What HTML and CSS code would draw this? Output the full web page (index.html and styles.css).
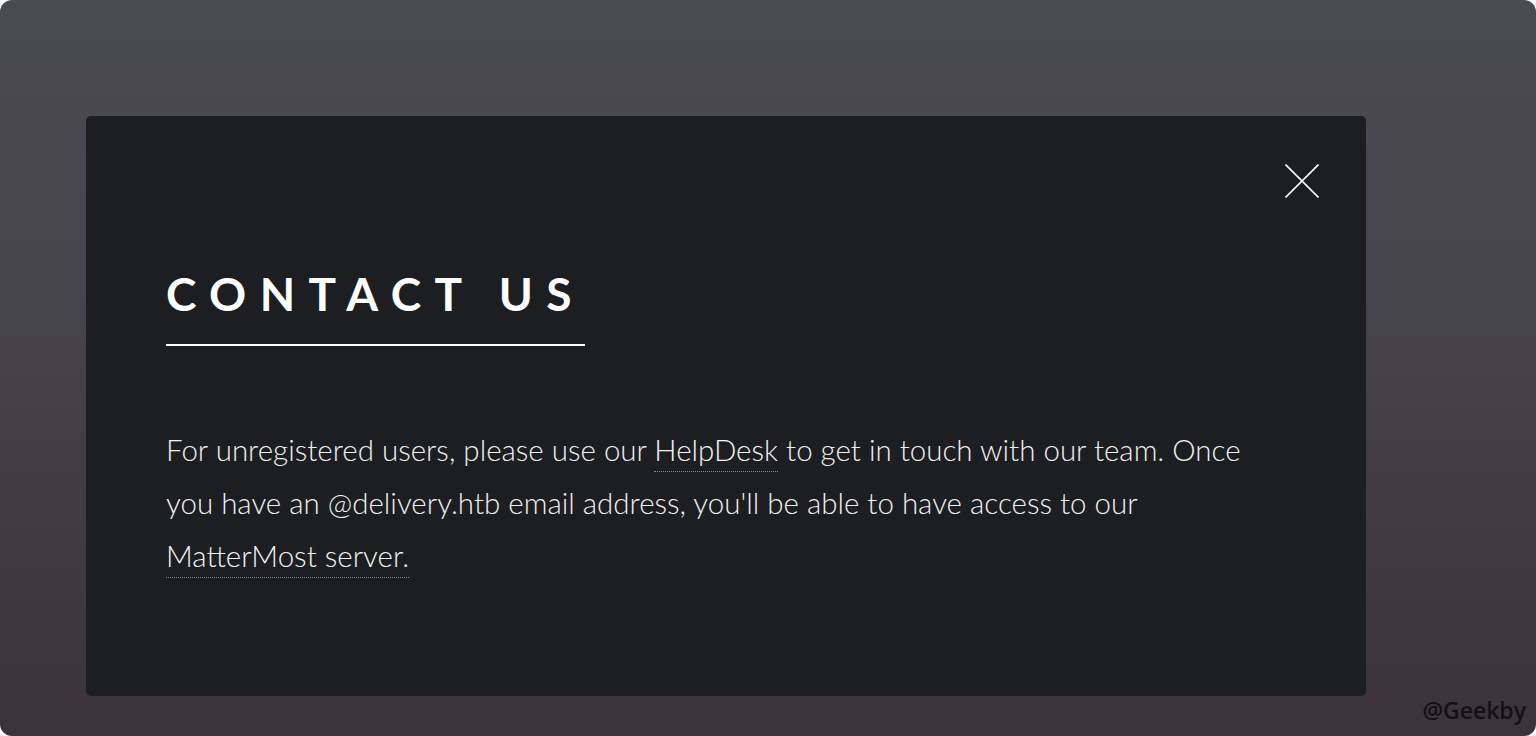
FILE: index.html
```html
<!DOCTYPE html>
<html lang="en">
<head>
    <meta charset="UTF-8">
    <meta name="viewport" content="width=device-width, initial-scale=1.0">
    <title>Contact Us</title>
    <link rel="stylesheet" href="styles.css">
</head>
<body>

    <div class="screen">
        <div class="modal">
            <div class="modalTop">
                <button class="closeBtn" aria-label="Close">
                    <svg width="34" height="34" viewBox="0 0 34 34">
                        <path d="M0.5 0.5 L33.5 33.5 M33.5 0.5 L0.5 33.5" stroke="#ffffff" stroke-width="1.6" fill="none"/>
                    </svg>
                </button>
            </div>
            <h2 class="title">CONTACT US</h2>
            <p class="text">
                For unregistered users, please use our <a href="#">HelpDesk</a> to get in touch with our team. Once
                you have an @delivery.htb email address, you'll be able to have access to our
                <a href="#">MatterMost server.</a>
            </p>
        </div>
        <div class="watermark">@Geekby</div>
    </div>

</body>
</html>
```

FILE: styles.css
```css
body {
    margin: 0;
    padding: 0;
    background-color: #ffffff;
    font-family: "Lato", "Open Sans", sans-serif;
}
.screen {
    position: relative;
    height: 736px;
    border-radius: 12px;
    overflow: hidden;
    background: linear-gradient(180deg, #4b4b53 0%, #46444c 40%, #3b323a 100%);
    padding: 116px 0 0 86px;
    box-sizing: border-box;
}
.modal {
    width: 1280px;
    height: 580px;
    box-sizing: border-box;
    background-color: #1c1e21;
    border-radius: 5px;
    padding: 47px 47px 0 80px;
}
.modalTop {
    display: flex;
    justify-content: flex-end;
}
.closeBtn {
    background: none;
    border: none;
    padding: 0;
    margin-top: 1px;
    width: 34px;
    height: 34px;
    cursor: pointer;
}
.closeBtn svg {
    display: block;
}
.title {
    display: inline-block;
    margin: 64px 0 0 0;
    padding: 0 0 18px 0;
    border-bottom: 2px solid #ffffff;
    color: #ffffff;
    font-size: 46px;
    font-weight: 700;
    letter-spacing: 13.4px;
    line-height: 64px;
}
.text {
    margin: 77px 0 0 0;
    width: 1120px;
    color: #f0f0f0;
    font-size: 29.5px;
    font-weight: 300;
    line-height: 53px;
}
.text a {
    color: #f4f4f4;
    text-decoration: none;
    padding-bottom: 4px;
    border-bottom: 1px dotted #8a8a8a;
}
.watermark {
    position: absolute;
    right: 10px;
    bottom: 10px;
    color: #121215;
    font-family: "Open Sans", sans-serif;
    font-weight: 600;
    font-size: 23px;
}
```
